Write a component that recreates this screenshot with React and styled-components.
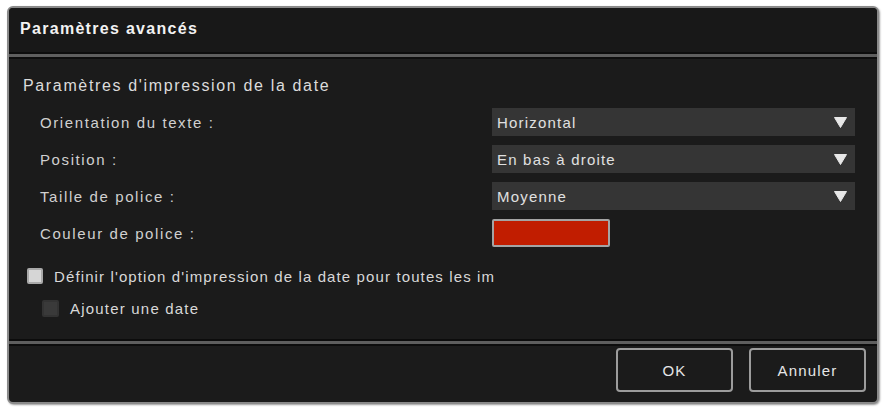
import React from 'react';
import styled, { createGlobalStyle } from 'styled-components';

const GlobalStyle = createGlobalStyle`
  html, body {
    margin: 0;
    padding: 0;
    background: #ffffff;
  }
  body {
    font-family: "Liberation Sans", Arial, sans-serif;
  }
`;

// Page wrapper, holds the dialog with a small white margin
const Page = styled.div`
  width: 884px;
  height: 407px;
  padding: 6px 5px 3px 7px;
  box-sizing: border-box;
`;

// Dialog frame with grey border and rounded corners
const Dialog = styled.div`
  height: 100%;
  display: flex;
  flex-direction: column;
  border: 2px solid #8a8a8a;
  border-radius: 6px;
  background: #1b1b1b;
  overflow: hidden;
  box-sizing: border-box;
  box-shadow: 1px 1px 2px rgba(0, 0, 0, 0.4);
`;

const TitleBar = styled.div`
  height: 44px;
  display: flex;
  align-items: center;
  padding-left: 11px;
  padding-bottom: 2px;
  box-sizing: border-box;
  background: #181818;
  color: #f2f2f2;
  font-size: 16px;
  font-weight: bold;
  letter-spacing: 1.3px;
`;

// Double dark / grey rule between sections
const Separator = styled.div`
  height: 3px;
  background: #5e5e5e;
  border-top: 2px solid #0c0c0c;
  border-bottom: 2px solid #0c0c0c;
`;

const Body = styled.div`
  flex: 1;
  padding: 17px 0 0 14px;
  color: #d8d8d8;
`;

const Heading = styled.div`
  font-size: 16px;
  line-height: 20px;
  letter-spacing: 1.65px;
  color: #dcdcdc;
  margin-bottom: 12px;
`;

const Form = styled.div`
  display: grid;
  grid-template-columns: 452px 363px;
  row-gap: 9px;
  padding-left: 17px;
`;

const Label = styled.div`
  height: 28px;
  display: flex;
  align-items: center;
  font-size: 15px;
  letter-spacing: 1.6px;
  color: #d0d0d0;
`;

const Select = styled.div`
  height: 28px;
  display: flex;
  align-items: center;
  justify-content: space-between;
  padding: 0 8px 0 5px;
  background: #353535;
  color: #e0e0e0;
  font-size: 15px;
  letter-spacing: 1.2px;
`;

const Arrow = styled.svg`
  width: 13px;
  height: 11px;
`;

const Swatch = styled.div`
  width: 118px;
  height: 28px;
  box-sizing: border-box;
  border: 2px solid #a4a4a4;
  border-radius: 2px;
  background: ${(p) => p.color};
`;

// Checkbox line with its label
const CheckRow = styled.div`
  display: flex;
  align-items: center;
  gap: 11px;
  height: 20px;
  margin-left: ${(p) => p.indent}px;
  margin-top: ${(p) => p.top}px;
  font-size: 15px;
  letter-spacing: ${(p) => p.spacing}px;
  color: #d8d8d8;
  white-space: nowrap;
`;

const Box = styled.div`
  flex: none;
  width: ${(p) => p.size}px;
  height: ${(p) => p.size}px;
  box-sizing: border-box;
  border-radius: 2px;
  background: ${(p) => (p.light ? '#d6d6d6' : '#3a3a3a')};
  border: 2px solid ${(p) => (p.light ? '#a9a9a9' : '#333')};
`;

const Footer = styled.div`
  height: 56px;
  display: flex;
  align-items: flex-start;
  justify-content: flex-end;
  gap: 16px;
  padding: 2px 11px 0 0;
  box-sizing: border-box;
`;

const Button = styled.button`
  width: 117px;
  height: 44px;
  background: #1b1b1b;
  border: 2px solid #9c9c9c;
  border-radius: 4px;
  color: #e6e6e6;
  font-family: "Liberation Sans", Arial, sans-serif;
  font-size: 15px;
  letter-spacing: 1.2px;
`;

const DropArrow = () => (
  <Arrow viewBox="0 0 13 11">
    <path d="M0.5 0.5 H12.5 L6.5 10.5 Z" fill="#e8e8e8" stroke="#e8e8e8" strokeLinejoin="round" />
  </Arrow>
);

const rows = [
  { label: 'Orientation du texte :', value: 'Horizontal' },
  { label: 'Position :', value: 'En bas à droite' },
  { label: 'Taille de police :', value: 'Moyenne' },
];

const App = () => {
  return (
    <Page>
      <GlobalStyle />
      <Dialog>
        <TitleBar>Paramètres avancés</TitleBar>
        <Separator />
        <Body>
          <Heading>Paramètres d'impression de la date</Heading>
          <Form>
            {rows.map((r) => (
              <React.Fragment key={r.label}>
                <Label>{r.label}</Label>
                <Select>
                  {r.value}
                  <DropArrow />
                </Select>
              </React.Fragment>
            ))}
            <Label>Couleur de police :</Label>
            <div>
              <Swatch color="#c11d00" />
            </div>
          </Form>
          <CheckRow indent={4} top={19} spacing={1.12}>
            <Box size={16} light />
            Définir l'option d'impression de la date pour toutes les im
          </CheckRow>
          <CheckRow indent={19} top={12} spacing={1.2}>
            <Box size={17} />
            Ajouter une date
          </CheckRow>
        </Body>
        <Separator />
        <Footer>
          <Button>OK</Button>
          <Button>Annuler</Button>
        </Footer>
      </Dialog>
    </Page>
  );
};

export default App;
